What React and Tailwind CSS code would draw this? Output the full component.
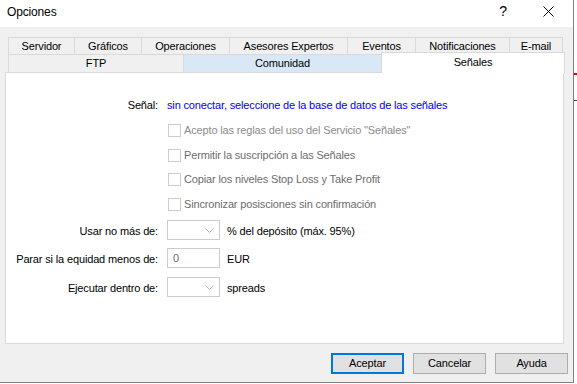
import React from "react";

const font = { fontFamily: '"Liberation Sans", Arial, sans-serif', letterSpacing: "-0.15px" };

function Chevron() {
  return (
    <svg width="9" height="6" viewBox="0 0 9 6" className="absolute right-[5px] top-[7px]">
      <path d="M0.5 0.5 L4.5 4.5 L8.5 0.5" fill="none" stroke="#b5b5b5" strokeWidth="1" />
    </svg>
  );
}

function CheckRow({ text, light, mt }) {
  return (
    <div className={`flex items-center h-[20px] ${mt}`}>
      <div className="w-[162px] shrink-0" />
      <div className="w-[13px] h-[13px] border border-[#cccccc] bg-white shrink-0" />
      <span className={`ml-[3px] ${light ? "text-[#8c8c8c]" : "text-[#6d6d6d]"}`}>{text}</span>
    </div>
  );
}

export default function App() {
  const row1 = [
    ["Servidor", 66],
    ["Gráficos", 67],
    ["Operaciones", 88],
    ["Asesores Expertos", 118],
    ["Eventos", 68],
    ["Notificaciones", 94],
    ["E-mail", 54],
  ];
  return (
    <div className="w-[577px] h-[384px] flex bg-white overflow-hidden text-[11px] text-black" style={font}>
      <div className="w-[574px] h-[383px] flex flex-col border-r border-b border-[#808080] shrink-0">
        <div className="h-[27px] bg-white flex items-center pl-[7px] pr-[19px] pb-[4px] shrink-0">
          <span className="text-[12px]">Opciones</span>
          <span className="ml-auto text-[14px] mr-[36px]">?</span>
          <svg width="11" height="11" viewBox="0 0 11 11">
            <path d="M0.5 0.5 L10.5 10.5 M10.5 0.5 L0.5 10.5" stroke="#000" strokeWidth="1" />
          </svg>
        </div>
        <div className="flex-1 bg-[#f0f0f0] flex flex-col pt-[10px] pl-[5px]">
          <div className="flex ml-[3px] h-[17px]">
            {row1.map(([t, w]) => (
              <div
                key={t}
                style={{ width: w }}
                className="h-full border-t border-l border-[#d9d9d9] last:border-r flex items-center justify-center leading-none"
              >
                {t}
              </div>
            ))}
          </div>
          <div className="flex ml-[3px] h-[18px] relative z-10">
            <div className="w-[175px] h-full border-t border-l border-[#d9d9d9] flex items-center justify-center leading-none">
              FTP
            </div>
            <div className="w-[198px] h-full border-t border-l border-[#d9d9d9] bg-[#d9e8f7] flex items-center justify-center leading-none">
              Comunidad
            </div>
            <div className="w-[184px] h-[21px] -mt-[2px] border-t border-l border-r border-[#d9d9d9] bg-white flex justify-center pt-[4px] leading-none">
              Señales
            </div>
          </div>
          <div className="w-[559px] h-[272px] border border-[#d9d9d9] bg-white flex flex-col">
            <div className="flex items-center h-[20px] mt-[22px]">
              <div className="w-[152px] text-right shrink-0">Señal:</div>
              <span className="ml-[9px] text-[#0000ff]">sin conectar, seleccione de la base de datos de las señales</span>
            </div>
            <CheckRow mt="mt-[5px]" light text={'Acepto las reglas del uso del Servicio "Señales"'} />
            <CheckRow mt="mt-[5px]" text="Permitir la suscripción a las Señales" />
            <CheckRow mt="mt-[4px]" text="Copiar los niveles Stop Loss y Take Profit" />
            <CheckRow mt="mt-[5px]" text="Sincronizar posisciones sin confirmación" />
            <div className="flex items-center h-[20px] mt-[6px]">
              <div className="w-[152px] text-right shrink-0 pt-[2px]">Usar no más de:</div>
              <div className="ml-[9px] w-[53px] h-[20px] border border-[#cccccc] bg-white relative shrink-0">
                <Chevron />
              </div>
              <span className="ml-[7px] pt-[2px]">% del depósito (máx. 95%)</span>
            </div>
            <div className="flex items-center h-[20px] mt-[8px]">
              <div className="w-[152px] text-right shrink-0 whitespace-nowrap pt-[2px]">Parar si la equidad menos de:</div>
              <div className="ml-[9px] w-[53px] h-[20px] border border-[#cccccc] bg-white shrink-0 flex items-center pl-[5px] text-[#6d6d6d]">
                0
              </div>
              <span className="ml-[7px] pt-[2px]">EUR</span>
            </div>
            <div className="flex items-center h-[20px] mt-[9px]">
              <div className="w-[152px] text-right shrink-0 pt-[2px]">Ejecutar dentro de:</div>
              <div className="ml-[9px] w-[53px] h-[20px] border border-[#cccccc] bg-white relative shrink-0">
                <Chevron />
              </div>
              <span className="ml-[7px] pt-[2px]">spreads</span>
            </div>
          </div>
          <div className="flex justify-end gap-[9px] mt-[9px] pr-[5px]">
            <button className="w-[73px] h-[21px] border-2 border-[#0078d7] bg-[#e1e1e1] leading-none">Aceptar</button>
            <button className="w-[73px] h-[21px] border border-[#adadad] bg-[#e1e1e1] leading-none">Cancelar</button>
            <button className="w-[73px] h-[21px] border border-[#adadad] bg-[#e1e1e1] leading-none">Ayuda</button>
          </div>
        </div>
      </div>
      <div className="flex-1 bg-white flex flex-col">
        <div className="h-[73px]" />
        <div className="h-[2px] bg-[#e00000]" />
        <div className="h-[25px]" />
        <div className="h-px bg-[#404040]" />
      </div>
    </div>
  );
}
